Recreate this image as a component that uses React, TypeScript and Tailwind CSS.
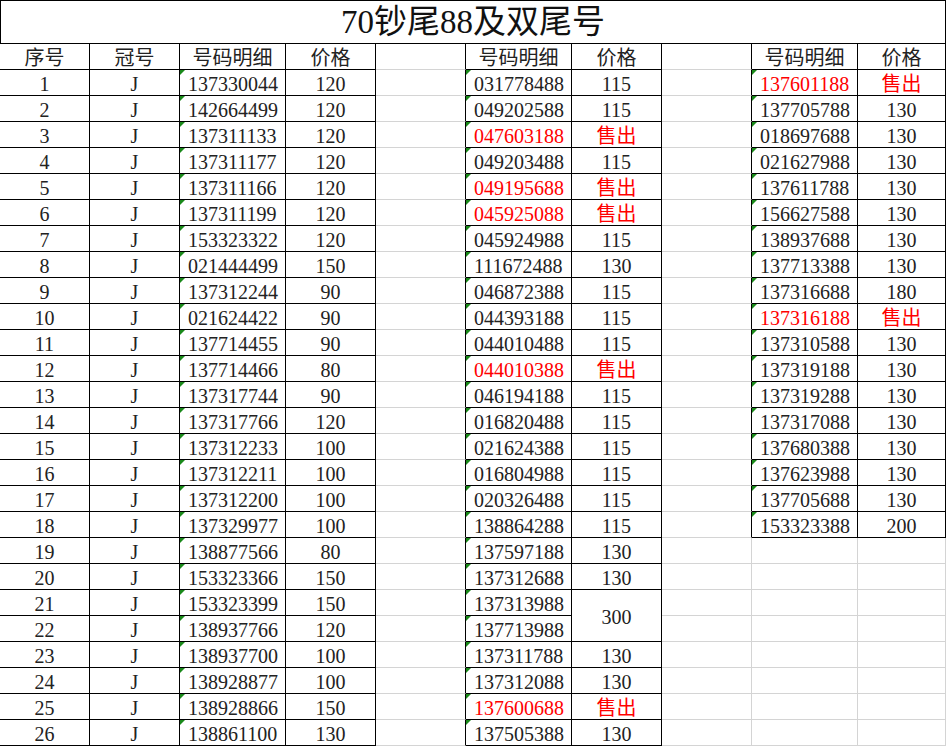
import React from 'react'

// ============================================================
// Data
// ============================================================

type Item = [string, string]

const LEFT: Item[] = [
  ['137330044', '120'], ['142664499', '120'], ['137311133', '120'], ['137311177', '120'],
  ['137311166', '120'], ['137311199', '120'], ['153323322', '120'], ['021444499', '150'],
  ['137312244', '90'], ['021624422', '90'], ['137714455', '90'], ['137714466', '80'],
  ['137317744', '90'], ['137317766', '120'], ['137312233', '100'], ['137312211', '100'],
  ['137312200', '100'], ['137329977', '100'], ['138877566', '80'], ['153323366', '150'],
  ['153323399', '150'], ['138937766', '120'], ['138937700', '100'], ['138928877', '100'],
  ['138928866', '150'], ['138861100', '130'],
]

const MID: Item[] = [
  ['031778488', '115'], ['049202588', '115'], ['047603188', '售出'], ['049203488', '115'],
  ['049195688', '售出'], ['045925088', '售出'], ['045924988', '115'], ['111672488', '130'],
  ['046872388', '115'], ['044393188', '115'], ['044010488', '115'], ['044010388', '售出'],
  ['046194188', '115'], ['016820488', '115'], ['021624388', '115'], ['016804988', '115'],
  ['020326488', '115'], ['138864288', '115'], ['137597188', '130'], ['137312688', '130'],
  ['137313988', '300'], ['137713988', ''], ['137311788', '130'], ['137312088', '130'],
  ['137600688', '售出'], ['137505388', '130'],
]

const RIGHT: Item[] = [
  ['137601188', '售出'], ['137705788', '130'], ['018697688', '130'], ['021627988', '130'],
  ['137611788', '130'], ['156627588', '130'], ['138937688', '130'], ['137713388', '130'],
  ['137316688', '180'], ['137316188', '售出'], ['137310588', '130'], ['137319188', '130'],
  ['137319288', '130'], ['137317088', '130'], ['137680388', '130'], ['137623988', '130'],
  ['137705688', '130'], ['153323388', '200'],
]

const ROWS = 27 // header + 26

// ============================================================
// Helpers
// ============================================================

function isBlack(r: number, c: number) {
  if (r < 0 || c < 0 || r >= ROWS || c > 9) return false
  if (c <= 3 || c === 5 || c === 6) return true
  if (c === 8 || c === 9) return r <= RIGHT.length
  return false
}

interface CellProps {
  r: number
  c: number
  children?: React.ReactNode
  kind?: 'num' | 'center'
  red?: boolean
  span?: boolean
}

function Cell({ r, c, children, kind = 'center', red, span }: CellProps) {
  const bottomRow = span ? r + 1 : r
  const right = isBlack(r, c) || isBlack(r, c + 1) ? 'border-r-black' : 'border-r-[#d4d4d4]'
  const bottom =
    isBlack(bottomRow, c) || isBlack(bottomRow + 1, c) ? 'border-b-black' : 'border-b-[#d4d4d4]'
  return (
    <div
      className={`relative flex items-center pt-[2px] border-r border-b ${right} ${bottom} ${
        span ? 'row-span-2' : ''
      } ${kind === 'num' ? 'justify-start pl-[8px]' : 'justify-center'} ${
        red ? 'text-[#ff0000]' : 'text-[#222]'
      }`}
    >
      {kind === 'num' && r > 0 && (
        <span className="absolute left-0 top-0 h-0 w-0 border-t-[5px] border-r-[5px] border-t-[#1a8a1a] border-r-transparent" />
      )}
      {children}
    </div>
  )
}

// ============================================================
// Component
// ============================================================

export default function App() {
  const cells: React.ReactNode[] = []
  for (let r = 0; r < ROWS; r++) {
    for (let c = 0; c < 10; c++) {
      const key = `${r}-${c}`
      if (r === 0) {
        const head = ['序号', '冠号', '号码明细', '价格', '', '号码明细', '价格', '', '号码明细', '价格'][c]
        cells.push(<Cell key={key} r={r} c={c}>{head}</Cell>)
        continue
      }
      const i = r - 1
      if (c === 0) cells.push(<Cell key={key} r={r} c={c}>{r}</Cell>)
      else if (c === 1) cells.push(<Cell key={key} r={r} c={c}>J</Cell>)
      else if (c === 2) cells.push(<Cell key={key} r={r} c={c} kind="num">{LEFT[i][0]}</Cell>)
      else if (c === 3) cells.push(<Cell key={key} r={r} c={c}>{LEFT[i][1]}</Cell>)
      else if (c === 5) {
        const red = MID[i][1] === '售出'
        cells.push(<Cell key={key} r={r} c={c} kind="num" red={red}>{MID[i][0]}</Cell>)
      } else if (c === 6) {
        if (i === 21) continue
        const red = MID[i][1] === '售出'
        cells.push(
          <Cell key={key} r={r} c={c} red={red} span={i === 20}>
            {MID[i][1]}
          </Cell>,
        )
      } else if (c === 8) {
        const it = RIGHT[i]
        cells.push(
          <Cell key={key} r={r} c={c} kind={it ? 'num' : 'center'} red={it?.[1] === '售出'}>
            {it?.[0]}
          </Cell>,
        )
      } else if (c === 9) {
        const it = RIGHT[i]
        cells.push(<Cell key={key} r={r} c={c} red={it?.[1] === '售出'}>{it?.[1]}</Cell>)
      } else cells.push(<Cell key={key} r={r} c={c} />)
    }
  }

  return (
    <div
      className="h-[746px] w-[949px] overflow-hidden bg-white text-[20px]"
      style={{ fontFamily: '"Liberation Serif", "Noto Sans CJK SC", serif' }}
    >
      <div className="flex h-[44px] w-[946px] items-center justify-center border border-black pt-[2px] text-[33px] text-[#111]">
        70钞尾88及双尾号
      </div>
      <div className="grid grid-cols-[90px_90px_106px_90px_90px_106px_90px_90px_106px_88px] auto-rows-[26px]">
        {cells}
      </div>
    </div>
  )
}
